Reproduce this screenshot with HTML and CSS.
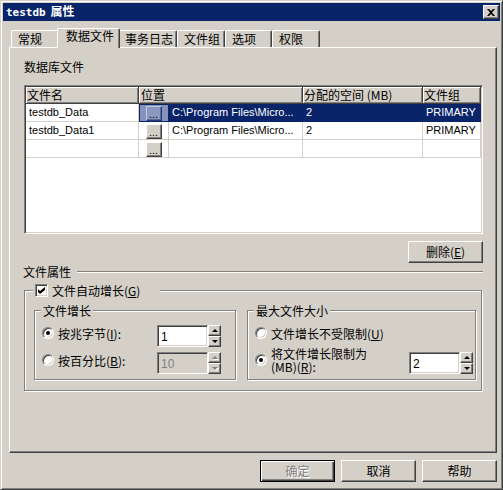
FILE: index.html
```html
<!DOCTYPE html>
<html>
<head>
	<meta charset="utf-8">
	<title>testdb 属性</title>
	<link rel="stylesheet" href="styles.css">
</head>
<body>
<div class="window">
	<div class="titlebar">
		<span class="title"><span class="title-name">testdb</span> 属性</span>
		<span class="close-btn">
			<svg width="8" height="7" viewBox="0 0 8 7">
				<path d="M0 0h2l2 2 2-2h2L5 3.5 8 7H6L4 5 2 7H0l3-3.5z"></path>
			</svg>
		</span>
	</div>

	<div class="dialog-body">
		<ul class="tabs">
			<li class="tab" style="width: 48px">常规</li>
			<li class="tab active" style="width: 63px">数据文件</li>
			<li class="tab" style="width: 59px">事务日志</li>
			<li class="tab" style="width: 48px">文件组</li>
			<li class="tab" style="width: 47px">选项</li>
			<li class="tab" style="width: 48px">权限</li>
		</ul>

		<div class="tab-panel">
			<div class="caption">数据库文件</div>

			<div class="file-grid">
				<div class="col-head">文件名</div>
				<div class="col-head span-2">位置</div>
				<div class="col-head">分配的空间 (MB)</div>
				<div class="col-head">文件组</div>

				<div class="cell latin">testdb_Data</div>
				<div class="cell browse current"><span class="dots-btn">...</span></div>
				<div class="cell latin selected">C:\Program Files\Micro...</div>
				<div class="cell latin selected">2</div>
				<div class="cell latin selected">PRIMARY</div>

				<div class="cell latin">testdb_Data1</div>
				<div class="cell browse"><span class="dots-btn">...</span></div>
				<div class="cell latin">C:\Program Files\Micro...</div>
				<div class="cell latin">2</div>
				<div class="cell latin">PRIMARY</div>

				<div class="cell"></div>
				<div class="cell browse"><span class="dots-btn">...</span></div>
				<div class="cell"></div>
				<div class="cell"></div>
				<div class="cell"></div>
			</div>

			<div class="grid-actions">
				<button class="btn">删除(<u>E</u>)</button>
			</div>

			<div class="separator">
				<span>文件属性</span>
				<i class="etched-line"></i>
			</div>

			<div class="group outer-group">
				<label class="check-title">
					<span class="checkbox">
						<svg width="7" height="7" viewBox="0 0 7 7">
							<path d="M0 2l2 2 5-4v3L2 7 0 5z"></path>
						</svg>
					</span>
					<span>文件自动增长(<u>G</u>)</span>
				</label>

				<div class="group-row">
					<div class="group growth">
						<div class="group-title">文件增长</div>
						<div class="option-row">
							<label class="option"><span class="radio checked"></span><span>按兆字节(<u>I</u>):</span></label>
							<div class="spinner" style="margin-right: 14px">
								<span class="spin-edit">1</span>
								<span class="spin-buttons">
									<span class="spin-btn"><i class="arrow-up"></i></span>
									<span class="spin-btn"><i class="arrow-down"></i></span>
								</span>
							</div>
						</div>
						<div class="option-row">
							<label class="option"><span class="radio"></span><span>按百分比(<u>B</u>):</span></label>
							<div class="spinner disabled" style="margin-right: 14px">
								<span class="spin-edit">10</span>
								<span class="spin-buttons">
									<span class="spin-btn"><i class="arrow-up"></i></span>
									<span class="spin-btn"><i class="arrow-down"></i></span>
								</span>
							</div>
						</div>
					</div>

					<div class="group max-size">
						<div class="group-title">最大文件大小</div>
						<div class="option-row">
							<label class="option"><span class="radio"></span><span>文件增长不受限制(<u>U</u>)</span></label>
						</div>
						<div class="option-row">
							<label class="option"><span class="radio checked"></span><span>将文件增长限制为<br>(MB)(<u>R</u>):</span></label>
							<div class="spinner" style="margin-right: 2px">
								<span class="spin-edit">2</span>
								<span class="spin-buttons">
									<span class="spin-btn"><i class="arrow-up"></i></span>
									<span class="spin-btn"><i class="arrow-down"></i></span>
								</span>
							</div>
						</div>
					</div>
				</div>
			</div>
		</div>

		<div class="dialog-buttons">
			<button class="btn default" disabled>确定</button>
			<button class="btn">取消</button>
			<button class="btn">帮助</button>
		</div>
	</div>
</div>
</body>
</html>
```

FILE: styles.css
```css
* {
	box-sizing: border-box;
}

body {
	margin: 0;
	background: #d4d0c8;
	font-family: "Noto Sans CJK SC", "Liberation Sans", sans-serif;
	font-size: 12px;
	line-height: 14px;
	color: #000;
}

u {
	text-decoration: underline;
	text-underline-offset: 1px;
}

/* window frame */

.window {
	width: 503px;
	height: 490px;
	padding: 2px;
	border: 1px solid;
	border-color: #d4d0c8 #404040 #404040 #d4d0c8;
	box-shadow: inset 1px 1px #fff, inset -1px -1px #808080;
}

.titlebar {
	height: 18px;
	padding: 0 1px 0 3px;
	background: #0a246a;
	color: #fff;
	display: flex;
	align-items: center;
	justify-content: space-between;
}

.title {
	font-weight: bold;
	font-size: 12px;
	line-height: 14px;
}

.title-name {
	font-family: "DejaVu Sans Mono", monospace;
	font-size: 11px;
	margin-right: 2px;
}

.close-btn {
	width: 16px;
	height: 14px;
	background: #d4d0c8;
	border: 1px solid;
	border-color: #fff #404040 #404040 #fff;
	box-shadow: inset -1px -1px #808080;
	display: flex;
	align-items: center;
	justify-content: center;
}

.close-btn svg {
	fill: #000;
	margin-left: -1px;
}

.dialog-body {
	padding: 7px 3px 0 6px;
}

/* tabs */

.tabs {
	list-style: none;
	margin: 0 0 0 2px;
	padding: 0;
	height: 19px;
	display: flex;
	align-items: flex-end;
}

.tab {
	height: 17px;
	padding-left: 6px;
	border: 1px solid;
	border-bottom: 0;
	border-color: #fff #404040 #404040 #fff;
	border-radius: 2px 2px 0 0;
	box-shadow: inset -1px 0 #808080;
	line-height: 15px;
	white-space: nowrap;
}

.tab.active {
	height: 20px;
	margin: 0 -2px -1px;
	padding-left: 8px;
	position: relative;
	z-index: 1;
	background: #d4d0c8;
	line-height: 14px;
}

.tab-panel {
	height: 406px;
	padding: 12px 0 0 14px;
	border: 1px solid;
	border-color: #fff #404040 #404040 #fff;
	box-shadow: inset -1px -1px #808080;
}

.caption {
	height: 14px;
}

/* file grid */

.file-grid {
	margin-top: 11px;
	width: 459px;
	height: 149px;
	padding: 1px;
	background: #fff;
	border: 1px solid;
	border-color: #808080 #fff #fff #808080;
	box-shadow: inset 1px 1px #404040, inset -1px -1px #d4d0c8;
	display: grid;
	grid-template-columns: 113px 30px 134px 120px 58px;
	grid-template-rows: 17px;
	grid-auto-rows: 18px;
	align-content: start;
}

.col-head {
	background: #d4d0c8;
	padding-left: 1px;
	border-right: 1px solid #404040;
	border-bottom: 1px solid #404040;
	box-shadow: inset 1px 1px #fff, inset -1px -1px #808080;
	line-height: 15px;
	white-space: nowrap;
	overflow: hidden;
}

.col-head.span-2 {
	grid-column: span 2;
	padding-left: 2px;
}

.cell {
	padding-left: 3px;
	border-right: 1px solid #d4d0c8;
	border-bottom: 1px solid #d4d0c8;
	line-height: 17px;
	white-space: nowrap;
	overflow: hidden;
}

.cell.latin {
	font-family: "Liberation Sans", sans-serif;
	font-size: 11px;
}

.cell.selected {
	background: #0a246a;
	border-color: #0a246a;
	color: #fff;
}

.cell.browse {
	padding: 1px 0 0;
	display: flex;
	justify-content: center;
	align-items: center;
}

.cell.current {
	background: #8592b9;
	border-color: #0a246a;
	box-shadow: inset 1px 1px #0a246a;
}

.dots-btn {
	width: 16px;
	height: 15px;
	background: #d4d0c8;
	border: 1px solid;
	border-color: #fff #404040 #404040 #fff;
	box-shadow: inset -1px -1px #808080;
	font-family: "Liberation Sans", sans-serif;
	font-size: 11px;
	line-height: 15px;
	text-align: center;
}

.cell.current .dots-btn {
	background: #8a97bf;
	border-color: #c4cae0 #2a3a78 #2a3a78 #c4cae0;
	box-shadow: inset -1px -1px #5a6a98;
}

/* buttons */

.btn {
	width: 75px;
	height: 22px;
	padding: 0;
	font: inherit;
	line-height: 14px;
	color: #000;
	background: #d4d0c8;
	border: 1px solid;
	border-color: #fff #404040 #404040 #fff;
	box-shadow: inset -1px -1px #808080;
}

.btn.default {
	border-color: #000;
	box-shadow: inset 1px 1px #fff, inset -1px -1px #404040, inset -2px -2px #808080;
}

.btn:disabled {
	color: #808080;
	text-shadow: 1px 1px #fff;
}

.grid-actions {
	width: 459px;
	margin-top: 7px;
	display: flex;
	justify-content: flex-end;
}

.separator {
	width: 459px;
	height: 12px;
	margin-top: 3px;
	display: flex;
	align-items: center;
	line-height: 12px;
}

.separator span {
	margin-left: -1px;
}

.etched-line {
	flex: 1;
	height: 2px;
	margin-left: 6px;
	border-top: 1px solid #808080;
	border-bottom: 1px solid #fff;
}

/* group boxes */

.group {
	border: 1px solid #808080;
	box-shadow: inset 1px 1px #fff, 1px 1px #fff;
}

.outer-group {
	width: 458px;
	height: 101px;
	margin-top: 12px;
	padding-left: 9px;
}

.check-title {
	width: 127px;
	height: 13px;
	margin: -7px 0 0 -1px;
	padding-left: 2px;
	background: #d4d0c8;
	display: flex;
	align-items: center;
	gap: 4px;
	line-height: 13px;
}

.checkbox {
	width: 13px;
	height: 13px;
	background: #fff;
	border: 1px solid;
	border-color: #808080 #fff #fff #808080;
	box-shadow: inset 1px 1px #404040, inset -1px -1px #d4d0c8;
	display: flex;
	align-items: center;
	justify-content: center;
}

.checkbox svg {
	fill: #000;
}

.group-row {
	margin-top: 13px;
	display: flex;
	gap: 11px;
}

.growth {
	width: 202px;
	height: 70px;
}

.max-size {
	width: 229px;
	height: 70px;
}

.group-title {
	width: fit-content;
	height: 13px;
	margin: -7px 0 0 6px;
	padding: 0 2px;
	background: #d4d0c8;
	line-height: 13px;
}

.option-row {
	height: 22px;
	margin-top: 5px;
	padding-left: 7px;
	display: flex;
	align-items: center;
}

.group-title + .option-row {
	margin-top: 8px;
}

.option {
	margin-bottom: 6px;
	display: flex;
	align-items: center;
	gap: 4px;
	line-height: 13px;
	white-space: nowrap;
}

.radio {
	width: 12px;
	height: 12px;
	flex: none;
	border-radius: 50%;
	background: #fff;
	border: 1px solid;
	border-color: #808080 #fff #fff #808080;
	box-shadow: inset 1px 1px #404040, inset -1px -1px #d4d0c8;
	display: flex;
	align-items: center;
	justify-content: center;
}

.radio.checked::after {
	content: "";
	width: 4px;
	height: 4px;
	border-radius: 50%;
	background: #000;
}

/* spinners */

.spinner {
	margin-left: auto;
	height: 22px;
	display: flex;
}

.spin-edit {
	width: 51px;
	padding: 3px 0 0 3px;
	background: #fff;
	border: 1px solid;
	border-color: #808080 #fff #fff #808080;
	box-shadow: inset 1px 1px #404040, inset -1px -1px #d4d0c8;
	font-family: "Liberation Sans", sans-serif;
	line-height: 16px;
}

.spin-buttons {
	width: 13px;
	display: flex;
	flex-direction: column;
}

.spin-btn {
	flex: 1;
	background: #d4d0c8;
	border: 1px solid;
	border-color: #fff #404040 #404040 #fff;
	box-shadow: inset -1px -1px #808080;
	display: flex;
	align-items: center;
	justify-content: center;
}

.arrow-up {
	border-left: 3px solid transparent;
	border-right: 3px solid transparent;
	border-bottom: 3px solid #000;
}

.arrow-down {
	border-left: 3px solid transparent;
	border-right: 3px solid transparent;
	border-top: 3px solid #000;
}

.spinner.disabled .spin-edit {
	background: #d4d0c8;
	color: #808080;
}

.spinner.disabled .arrow-up {
	border-bottom-color: #808080;
	filter: drop-shadow(1px 1px #fff);
}

.spinner.disabled .arrow-down {
	border-top-color: #808080;
	filter: drop-shadow(1px 1px #fff);
}

.dialog-buttons {
	margin-top: 7px;
	display: flex;
	justify-content: flex-end;
	gap: 6px;
}
```
